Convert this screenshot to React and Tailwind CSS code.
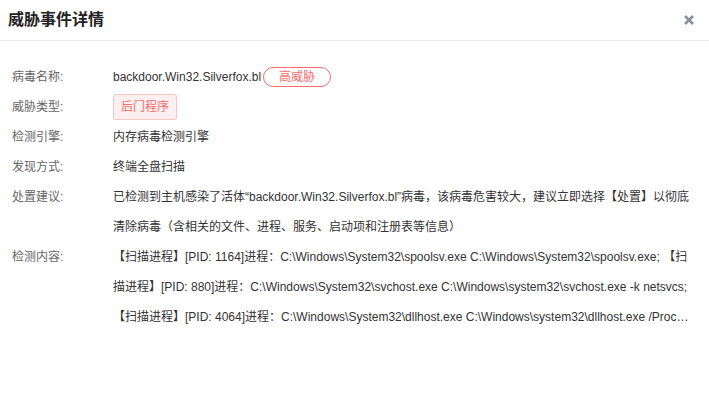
import React from "react";

const font = { fontFamily: '"Liberation Sans", "Noto Sans CJK SC", sans-serif' };

const detectLines = [
  "【扫描进程】[PID: 1164]进程：C:\\Windows\\System32\\spoolsv.exe C:\\Windows\\System32\\spoolsv.exe; ",
  "【扫描进程】[PID: 880]进程：C:\\Windows\\System32\\svchost.exe C:\\Windows\\system32\\svchost.exe -k netsvcs; ",
  "【扫描进程】[PID: 4064]进程：C:\\Windows\\System32\\dllhost.exe C:\\Windows\\system32\\dllhost.exe /Processid:{AB8902B4-09CA-4BB6-B78D-A8F59079A8D5}; ",
];

function Row({ label, children }) {
  return (
    <div className="flex">
      <div className="w-[101px] shrink-0 text-[12px] leading-[30px] text-[#666]">{label}</div>
      <div className="min-w-0 flex-1 text-[12px] leading-[30px] text-[#333]">{children}</div>
    </div>
  );
}

export default function App() {
  return (
    <div className="h-[395px] w-[709px] bg-white" style={font}>
      {/* header */}
      <div className="flex h-[41px] items-center justify-between border-b border-[#e8e8e8] pl-[8px] pr-[14px]">
        <span className="text-[16px] font-bold text-[#222]">威胁事件详情</span>
        <svg width="12" height="12" viewBox="0 0 12 12" className="text-[#8a8f99]">
          <path d="M2 2L10 10M10 2L2 10" stroke="currentColor" strokeWidth="2.6" />
        </svg>
      </div>

      <div className="pl-[12px] pr-[15px] pt-[21px]">
        <Row label="病毒名称:">
          <div className="flex items-center">
            <span>backdoor.Win32.Silverfox.bl</span>
            <span className="ml-[2px] inline-flex h-[20px] w-[68px] items-center justify-center rounded-full border border-[#f56c6c] text-[12px] leading-none text-[#f56c6c]">
              高威胁
            </span>
          </div>
        </Row>
        <Row label="威胁类型:">
          <div className="flex h-[30px] items-center">
            <span className="inline-flex h-[26px] items-center rounded-[3px] border border-[#fbc4c4] bg-[#fef0f0] px-[7px] text-[12px] leading-none text-[#f56c6c]">
              后门程序
            </span>
          </div>
        </Row>
        <Row label="检测引擎:">内存病毒检测引擎</Row>
        <Row label="发现方式:">终端全盘扫描</Row>
        <Row label="处置建议:">
          已检测到主机感染了活体“backdoor.Win32.Silverfox.bl”病毒，该病毒危害较大，建议立即选择【处置】以彻底清除病毒（含相关的文件、进程、服务、启动项和注册表等信息）
        </Row>
        <Row label="检测内容:">
          <div className="line-clamp-3 break-all">{detectLines.join("")}</div>
        </Row>
      </div>
    </div>
  );
}
